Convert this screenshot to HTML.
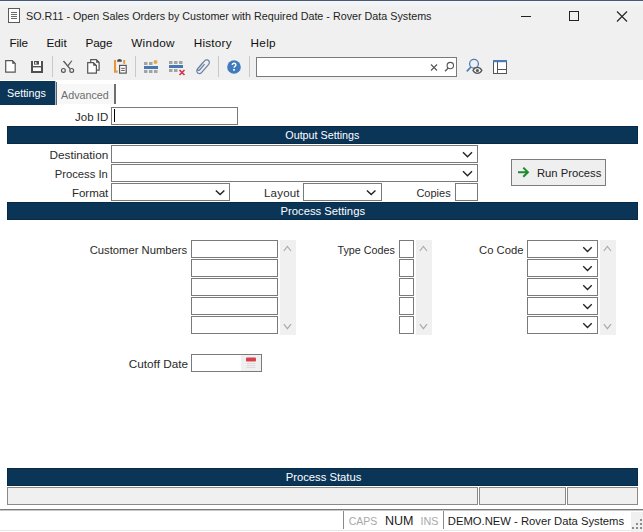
<!DOCTYPE html>
<html><head><meta charset="utf-8">
<style>
*{box-sizing:border-box;margin:0;padding:0}
html,body{width:643px;height:532px;overflow:hidden;background:#fff;font-family:"Liberation Sans",sans-serif}
.a{position:absolute}
.t{position:absolute;white-space:pre;font-family:"Liberation Sans",sans-serif}
</style></head><body>
<div class="a" style="left:0px;top:0px;width:643px;height:1px;background:#4b5a6c;"></div>
<div class="a" style="left:0px;top:2px;width:643px;height:78px;background:#f0f0f0;"></div>
<div class="a" style="left:0px;top:1px;width:643px;height:6px;background:linear-gradient(#f2f7fd,#f0f0f0);"></div>
<svg class="a" style="left:0;top:0" width="643" height="82"><rect x="8.5" y="8.5" width="11" height="14" fill="#fff" stroke="#5a5a5a"/><path d="M11 12.5h6M11 14.5h6M11 16.5h6M11 18.5h6" stroke="#6a6a6a" stroke-width="1"/><path d="M521 16.5h10" stroke="#222" stroke-width="1"/><rect x="569.5" y="11.5" width="9" height="9" fill="none" stroke="#222"/><path d="M617 11.5L627 21.5M627 11.5L617 21.5" stroke="#222" stroke-width="1.1"/><path d="M5.7 60.6H12.4L15.2 63.4V72.2H5.7Z" fill="#fff" stroke="#555" stroke-width="1.2"/><path d="M12.2 60.2V63.7H15.7Z" fill="#555"/><rect x="31" y="61" width="2" height="12" fill="#505050"/><rect x="41" y="61" width="2" height="12" fill="#505050"/><rect x="31" y="71" width="12" height="2" fill="#505050"/><rect x="31" y="66" width="12" height="1.6" fill="#505050"/><rect x="33" y="61" width="8" height="5" fill="#fff"/><rect x="33" y="67.6" width="8" height="3.4" fill="#fff"/><rect x="34" y="61" width="5" height="3.6" fill="#505050"/><rect x="35.2" y="62" width="1.2" height="2" fill="#fff"/><path d="M52.5 56v21M135.5 56v21M218.5 56v21M249.5 56v21" stroke="#c9c9c9"/><circle cx="63.4" cy="70.4" r="1.9" fill="none" stroke="#555" stroke-width="1.2"/><circle cx="71.7" cy="70.4" r="1.9" fill="none" stroke="#555" stroke-width="1.2"/><path d="M62.8 61.2L64.2 60.8L70.6 68.4L69.4 69z" fill="#555"/><path d="M72.4 60.8L71.4 60.6L67.6 65.3L68.6 66z" fill="#555"/><path d="M90.7 59.7H96.3L99.1 62.5V70.2H90.7Z" fill="#fff" stroke="#555" stroke-width="1.2"/><path d="M96.1 59.3V62.7H99.5Z" fill="#555"/><path d="M87.7 62.6H93.4L96.4 65.6V73.2H87.7Z" fill="#fff" stroke="#555" stroke-width="1.2"/><path d="M93.2 62.2V65.8H96.8Z" fill="#555"/><path d="M115 60V71.6H117.6" fill="none" stroke="#e8963a" stroke-width="2.1"/><path d="M124.2 60V63.8" fill="none" stroke="#e8963a" stroke-width="1.9"/><path d="M117.2 61.7V60.6Q117.2 59 119.5 59Q121.8 59 121.8 60.6V61.7Z" fill="#4a4a4a"/><rect x="119.6" y="65.4" width="6.6" height="7.7" fill="#fff" stroke="#555" stroke-width="1.2"/><path d="M121.2 68.3h3.6M121.2 70.4h3.6" stroke="#555" stroke-width="1"/><rect x="144" y="62" width="3.5" height="3" fill="#a3a3a3"/><rect x="149" y="62" width="3.5" height="3" fill="#a3a3a3"/><circle cx="155.5" cy="62" r="2" fill="#e2a955"/><rect x="144" y="66" width="14" height="3" fill="#4677b2"/><rect x="144" y="70" width="3.5" height="3" fill="#a3a3a3"/><rect x="149" y="70" width="3.5" height="3" fill="#a3a3a3"/><rect x="154" y="70" width="3.5" height="3" fill="#a3a3a3"/><rect x="169" y="61" width="3.5" height="3" fill="#a3a3a3"/><rect x="174" y="61" width="3.5" height="3" fill="#a3a3a3"/><rect x="179" y="61" width="3.5" height="3" fill="#a3a3a3"/><rect x="169" y="65" width="14" height="3" fill="#4677b2"/><rect x="169" y="69" width="3.5" height="3" fill="#a3a3a3"/><rect x="174" y="69" width="3.5" height="3" fill="#a3a3a3"/><path d="M179.5 70L184.5 75M184.5 70L179.5 75" stroke="#d0304a" stroke-width="1.6"/><path d="M203 62.5l-5.5 6.5c-1.6 1.9-0.4 4.6 2 4.6c0.8 0 1.5-0.4 2-1l7.2-8.3c1.2-1.5 0.7-3.8-1.2-4.4c-1-0.3-2 0-2.7 0.8l-6.8 7.9c-0.6 0.7-0.3 1.7 0.6 1.8c0.4 0 0.7-0.1 1-0.4l5-5.8" fill="none" stroke="#6a82a4" stroke-width="1.25"/><circle cx="234" cy="67" r="6.8" fill="#3f7bbd"/><path d="M232.3 65c0-1.1 0.8-1.8 1.8-1.8s1.8 0.7 1.8 1.7c0 1.3-1.8 1.4-1.8 2.8" fill="none" stroke="#fff" stroke-width="1.4"/><rect x="233.1" y="69" width="1.8" height="1.7" fill="#fff"/><rect x="256.5" y="57.5" width="200" height="19" fill="#fff" stroke="#7a7a7a"/><path d="M431 64.5l6 6M437 64.5l-6 6" stroke="#555" stroke-width="1.1"/><circle cx="450.3" cy="65.6" r="3.2" fill="none" stroke="#555" stroke-width="1.1"/><path d="M448 68.3L445 71.3" stroke="#555" stroke-width="1.3"/><circle cx="474" cy="63.8" r="4.4" fill="none" stroke="#4d7db5" stroke-width="1.3"/><path d="M470.9 67L466.8 71.3" stroke="#4d7db5" stroke-width="1.7"/><path d="M472.9 70.4c1.2-2 2.8-3 4.5-3s3.3 1 4.5 3c-1.2 2-2.8 3-4.5 3s-3.3-1-4.5-3z" fill="#f4f4f4" stroke="#555" stroke-width="1.15"/><circle cx="477.4" cy="70.4" r="1.5" fill="#555"/><rect x="493.5" y="60.5" width="13" height="13" fill="#fff" stroke="#555"/><rect x="493" y="60" width="14" height="2.2" fill="#4a7cb5"/><path d="M497.5 62v11.5M497.5 69.5h9" stroke="#555"/></svg>
<div class="a" style="left:0px;top:81px;width:55px;height:24px;background:#0b3657;"></div>
<div class="a" style="left:55px;top:81px;width:1px;height:24px;background:#a9bccd;"></div>
<div class="a" style="left:56px;top:82px;width:1px;height:23px;background:#5f6468;"></div>
<div class="a" style="left:57px;top:84px;width:57px;height:20px;background:#f7f7f7;"></div>
<div class="a" style="left:114px;top:84px;width:2px;height:20px;background:#6f6f6f;"></div>
<div class="a" style="left:111px;top:107px;width:127px;height:18px;border:1px solid #7a7a7a;background:#fff;"></div>
<div class="a" style="left:114px;top:109px;width:1.2999999999999972px;height:13px;background:#000;"></div>
<div class="a" style="left:7px;top:126px;width:631px;height:18px;background:#0b3557;border:1px solid #082a46"></div>
<div class="a" style="left:7px;top:202px;width:631px;height:18px;background:#0b3557;border:1px solid #082a46"></div>
<div class="a" style="left:7px;top:468px;width:631px;height:18px;background:#0b3557;border:1px solid #082a46"></div>
<div class="a" style="left:111px;top:145px;width:367px;height:18px;border:1px solid #7a7a7a;background:#fff;"></div>
<div class="a" style="left:111px;top:164px;width:367px;height:18px;border:1px solid #7a7a7a;background:#fff;"></div>
<div class="a" style="left:111px;top:183px;width:119px;height:18px;border:1px solid #7a7a7a;background:#fff;"></div>
<div class="a" style="left:303px;top:183px;width:79px;height:18px;border:1px solid #7a7a7a;background:#fff;"></div>
<div class="a" style="left:455px;top:183px;width:23px;height:18px;border:1px solid #7a7a7a;background:#fff;"></div>
<div class="a" style="left:511px;top:159px;width:95px;height:27px;border:1px solid #7d7d7d;background:#efefef;"></div>
<div class="a" style="left:191px;top:240px;width:87px;height:18px;border:1px solid #7a7a7a;background:#fff;"></div>
<div class="a" style="left:399px;top:240px;width:15px;height:18px;border:1px solid #7a7a7a;background:#fff;"></div>
<div class="a" style="left:527px;top:240px;width:71px;height:18px;border:1px solid #7a7a7a;background:#fff;"></div>
<div class="a" style="left:191px;top:259px;width:87px;height:18px;border:1px solid #7a7a7a;background:#fff;"></div>
<div class="a" style="left:399px;top:259px;width:15px;height:18px;border:1px solid #7a7a7a;background:#fff;"></div>
<div class="a" style="left:527px;top:259px;width:71px;height:18px;border:1px solid #7a7a7a;background:#fff;"></div>
<div class="a" style="left:191px;top:278px;width:87px;height:18px;border:1px solid #7a7a7a;background:#fff;"></div>
<div class="a" style="left:399px;top:278px;width:15px;height:18px;border:1px solid #7a7a7a;background:#fff;"></div>
<div class="a" style="left:527px;top:278px;width:71px;height:18px;border:1px solid #7a7a7a;background:#fff;"></div>
<div class="a" style="left:191px;top:297px;width:87px;height:18px;border:1px solid #7a7a7a;background:#fff;"></div>
<div class="a" style="left:399px;top:297px;width:15px;height:18px;border:1px solid #7a7a7a;background:#fff;"></div>
<div class="a" style="left:527px;top:297px;width:71px;height:18px;border:1px solid #7a7a7a;background:#fff;"></div>
<div class="a" style="left:191px;top:316px;width:87px;height:18px;border:1px solid #7a7a7a;background:#fff;"></div>
<div class="a" style="left:399px;top:316px;width:15px;height:18px;border:1px solid #7a7a7a;background:#fff;"></div>
<div class="a" style="left:527px;top:316px;width:71px;height:18px;border:1px solid #7a7a7a;background:#fff;"></div>
<div class="a" style="left:280px;top:240px;width:16px;height:95px;background:#f0f0f0;"></div>
<div class="a" style="left:416px;top:240px;width:16px;height:95px;background:#f0f0f0;"></div>
<div class="a" style="left:600px;top:240px;width:16px;height:95px;background:#f0f0f0;"></div>
<div class="a" style="left:191px;top:354px;width:71px;height:18px;border:1px solid #7a7a7a;background:#fff;"></div>
<div class="a" style="left:241px;top:355px;width:20px;height:16px;background:#f0f0f0;"></div>
<div class="a" style="left:7px;top:487px;width:471px;height:18px;border:1px solid #8a8a8a;background:#f0f0f0;"></div>
<div class="a" style="left:479px;top:487px;width:87px;height:18px;border:1px solid #8a8a8a;background:#f0f0f0;"></div>
<div class="a" style="left:567px;top:487px;width:71px;height:18px;border:1px solid #8a8a8a;background:#f0f0f0;"></div>
<div class="a" style="left:0px;top:509px;width:643px;height:1px;background:#7a7a7a;"></div>
<div class="a" style="left:0px;top:510px;width:643px;height:1px;background:#c8c8c8;"></div>
<div class="a" style="left:343px;top:511px;width:1px;height:18px;background:#8a8a8a;"></div>
<div class="a" style="left:443px;top:511px;width:1px;height:18px;background:#8a8a8a;"></div>
<div class="a" style="left:0px;top:530px;width:643px;height:1px;background:#e6e6e6;"></div>
<div class="a" style="left:631px;top:512px;width:12px;height:20px;background:#f0f0f0;"></div>
<svg class="a" style="left:0;top:0" width="643" height="532"><path d="M463.0 152.25L467.5 156.75L472.0 152.25" fill="none" stroke="#222" stroke-width="1.4"/><path d="M463.0 171.25L467.5 175.75L472.0 171.25" fill="none" stroke="#222" stroke-width="1.4"/><path d="M215.85 190.4L220.1 194.6L224.35 190.4" fill="none" stroke="#222" stroke-width="1.4"/><path d="M366.95 190.4L371.2 194.6L375.45 190.4" fill="none" stroke="#222" stroke-width="1.4"/><path d="M583.25 247.20000000000002L587.5 251.4L591.75 247.20000000000002" fill="none" stroke="#222" stroke-width="1.4"/><path d="M583.25 266.2L587.5 270.40000000000003L591.75 266.2" fill="none" stroke="#222" stroke-width="1.4"/><path d="M583.25 285.2L587.5 289.40000000000003L591.75 285.2" fill="none" stroke="#222" stroke-width="1.4"/><path d="M583.25 304.2L587.5 308.40000000000003L591.75 304.2" fill="none" stroke="#222" stroke-width="1.4"/><path d="M583.25 323.2L587.5 327.40000000000003L591.75 323.2" fill="none" stroke="#222" stroke-width="1.4"/><path d="M283.79999999999995 251.0L287.4 246.39999999999998L291.0 251.0" fill="none" stroke="#acacac" stroke-width="1.2"/><path d="M283.79999999999995 324.09999999999997L287.4 328.7L291.0 324.09999999999997" fill="none" stroke="#acacac" stroke-width="1.2"/><path d="M419.79999999999995 251.0L423.4 246.39999999999998L427.0 251.0" fill="none" stroke="#acacac" stroke-width="1.2"/><path d="M419.79999999999995 324.09999999999997L423.4 328.7L427.0 324.09999999999997" fill="none" stroke="#acacac" stroke-width="1.2"/><path d="M603.8 251.0L607.4 246.39999999999998L611.0 251.0" fill="none" stroke="#acacac" stroke-width="1.2"/><path d="M603.8 324.09999999999997L607.4 328.7L611.0 324.09999999999997" fill="none" stroke="#acacac" stroke-width="1.2"/><path d="M518 172.2h10M523.3 167.6l4.6 4.6l-4.6 4.6" fill="none" stroke="#1e8c2e" stroke-width="2"/><rect x="246" y="357.5" width="10" height="4" rx="1" fill="#d9404a"/><path d="M246.5 363.5h9M246.5 365.5h9M246.5 367.5h9" stroke="#dcdcdc" stroke-width="1"/><rect x="640" y="519" width="2" height="2" fill="#8c8c8c"/><rect x="636" y="523" width="2" height="2" fill="#8c8c8c"/><rect x="640" y="523" width="2" height="2" fill="#8c8c8c"/><rect x="632" y="527" width="2" height="2" fill="#8c8c8c"/><rect x="636" y="527" width="2" height="2" fill="#8c8c8c"/><rect x="640" y="527" width="2" height="2" fill="#8c8c8c"/></svg>
<div class="t" style="left:26px;top:11px;font-size:10.75px;line-height:10.75px;color:#1e1e1e;letter-spacing:0px;">SO.R11 - Open Sales Orders by Customer with Required Date - Rover Data Systems</div>
<div class="t" style="left:9.5px;top:37px;font-size:11.75px;line-height:11.75px;color:#111;letter-spacing:-0.167px;">File</div>
<div class="t" style="left:46.5px;top:37px;font-size:11.75px;line-height:11.75px;color:#111;letter-spacing:-0.033px;">Edit</div>
<div class="t" style="left:85.4px;top:37px;font-size:11.75px;line-height:11.75px;color:#111;letter-spacing:-0.1px;">Page</div>
<div class="t" style="left:131.2px;top:37px;font-size:11.75px;line-height:11.75px;color:#111;letter-spacing:0.32px;">Window</div>
<div class="t" style="left:193.7px;top:37px;font-size:11.75px;line-height:11.75px;color:#111;letter-spacing:0.217px;">History</div>
<div class="t" style="left:250.4px;top:37px;font-size:11.75px;line-height:11.75px;color:#111;letter-spacing:0.367px;">Help</div>
<div class="t" style="left:7px;top:88px;font-size:10.75px;line-height:10.75px;color:#fff;letter-spacing:0px;">Settings</div>
<div class="t" style="left:61px;top:90px;font-size:10.75px;line-height:10.75px;color:#6e6e6e;letter-spacing:0px;">Advanced</div>
<div class="t" style="left:75.1px;top:112px;font-size:11.5px;line-height:11.5px;color:#2a2a2a;letter-spacing:0px;">Job ID</div>
<div class="t" style="left:285.3px;top:130px;font-size:10.75px;line-height:10.75px;color:#fff;letter-spacing:0px;">Output Settings</div>
<div class="t" style="left:49.5px;top:149.3px;font-size:11.75px;line-height:11.75px;color:#2a2a2a;letter-spacing:0px;">Destination</div>
<div class="t" style="left:54.7px;top:169px;font-size:11.25px;line-height:11.25px;color:#2a2a2a;letter-spacing:0px;">Process In</div>
<div class="t" style="left:71.9px;top:188px;font-size:11.5px;line-height:11.5px;color:#2a2a2a;letter-spacing:0px;">Format</div>
<div class="t" style="left:264px;top:188px;font-size:11.5px;line-height:11.5px;color:#2a2a2a;letter-spacing:0.2px;">Layout</div>
<div class="t" style="left:416.4px;top:188px;font-size:11.0px;line-height:11.0px;color:#2a2a2a;letter-spacing:0px;">Copies</div>
<div class="t" style="left:536.9px;top:168.3px;font-size:11.25px;line-height:11.25px;color:#222;letter-spacing:0px;">Run Process</div>
<div class="t" style="left:280.6px;top:206px;font-size:11.25px;line-height:11.25px;color:#fff;letter-spacing:0px;">Process Settings</div>
<div class="t" style="left:89.7px;top:245.3px;font-size:11.25px;line-height:11.25px;color:#2a2a2a;letter-spacing:0px;">Customer Numbers</div>
<div class="t" style="left:337.5px;top:245.4px;font-size:10.75px;line-height:10.75px;color:#2a2a2a;letter-spacing:0px;">Type Codes</div>
<div class="t" style="left:479.1px;top:245.3px;font-size:11.25px;line-height:11.25px;color:#2a2a2a;letter-spacing:0px;">Co Code</div>
<div class="t" style="left:128.8px;top:358.4px;font-size:11.75px;line-height:11.75px;color:#2a2a2a;letter-spacing:0px;">Cutoff Date</div>
<div class="t" style="left:285.7px;top:472px;font-size:11.25px;line-height:11.25px;color:#fff;letter-spacing:0px;">Process Status</div>
<div class="t" style="left:348.7px;top:515.7px;font-size:10.5px;line-height:10.5px;color:#a8a8a8;letter-spacing:0px;">CAPS</div>
<div class="t" style="left:385px;top:514.7px;font-size:12.5px;line-height:12.5px;color:#1a1a1a;letter-spacing:0px;">NUM</div>
<div class="t" style="left:420.5px;top:515.7px;font-size:10.75px;line-height:10.75px;color:#a8a8a8;letter-spacing:0px;">INS</div>
<div class="t" style="left:447.8px;top:515.7px;font-size:11.25px;line-height:11.25px;color:#1a1a1a;letter-spacing:0px;">DEMO.NEW - Rover Data Systems</div>
</body></html>
